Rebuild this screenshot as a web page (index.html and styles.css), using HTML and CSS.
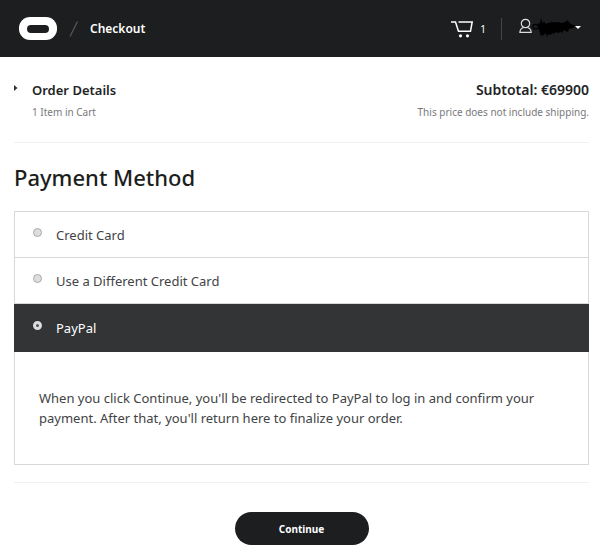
FILE: index.html
```
<!DOCTYPE html>
<html lang="en">
  <head>
    <meta charset="UTF-8" />
    <meta name="viewport" content="width=device-width, initial-scale=1.0" />
    <title>Checkout</title>
    <link rel="stylesheet" href="styles.css">
  </head>
  <body>
    <header class="header">
      <a class="logo" href="#" aria-label="Home">
        <svg width="38" height="23" viewBox="0 0 38 23">
          <rect width="38" height="23" rx="11" fill="#fff" />
          <rect x="8" y="8" width="22" height="8" rx="4" fill="#1c1e20" />
        </svg>
      </a>
      <svg class="slash" width="10" height="16" viewBox="0 0 10 16">
        <path d="M1 15.5L8.500 .5" stroke="#55585a" stroke-width="1.300" />
      </svg>
      <span class="title">Checkout</span>
      <a class="cart" href="#" aria-label="Cart, 1 item">
        <svg width="22" height="18" viewBox="0 0 22 18" fill="none" stroke="#fff" stroke-width="1.500">
          <path d="M0 2H4.500L7.500 11.200H19.500L21.200 2H7.500" />
          <circle cx="9.500" cy="15.800" r="1.600" fill="#fff" stroke="none" />
          <circle cx="16.500" cy="15.800" r="1.600" fill="#fff" stroke="none" />
        </svg>
        <span class="count">1</span>
      </a>
      <button class="account" type="button" aria-label="Account menu">
        <svg width="62" height="28" viewBox="0 0 62 28">
          <g fill="none" stroke="#ddd" stroke-width="1.200">
            <circle cx="6.500" cy="8.500" r="4.200" />
            <path d="M4.500 12.500C2 13.300 1 15 .9 17.400H12.200C12.100 15 11 13.300 8.500 12.500" />
          </g>
          <path d="M19 10C14 8 12 12 16 14C19 15 20 12 22 10" fill="none" stroke="#000" stroke-width="1.300" />
          <path d="M18 10L21 9L22 3L24 9L30 8L36 7L43 8L49 6L52 9L57 11L54 13L50 14L49 17L44 15L40 18L35 17L31 20L27 18L23 21L21 17Z" fill="#000" />
          <path d="M20 8L22 20L25 7L28 20L32 8L35 18L40 8L43 17L48 6L51 12" fill="none" stroke="#000" stroke-width="1.300" />
          <path d="M56 11H62L59 14Z" fill="#fff" />
        </svg>
      </button>
    </header>
    <main class="main">
      <section class="order">
        <button class="toggle" type="button" aria-label="Show order details">
          <svg width="4" height="6" viewBox="0 0 4 6">
            <path d="M0 0L3.500 3L0 6Z" fill="#333" />
          </svg>
        </button>
        <div class="order-info">
          <h2 class="order-title">Order Details</h2>
          <p class="note">1 Item in Cart</p>
        </div>
        <div class="order-total">
          <h2 class="order-title subtotal">Subtotal: €69900</h2>
          <p class="note">This price does not include shipping.</p>
        </div>
      </section>
      <h1 class="heading">Payment Method</h1>
      <form class="form">
        <div class="methods">
          <label class="method" for="card">
            <input type="radio" name="method" id="card" />
            <span>Credit Card</span>
          </label>
          <label class="method" for="other">
            <input type="radio" name="method" id="other" />
            <span>Use a Different Credit Card</span>
          </label>
          <label class="method selected" for="paypal">
            <input type="radio" name="method" id="paypal" checked />
            <span>PayPal</span>
          </label>
          <p class="details">
            When you click Continue, you'll be redirected to PayPal to log in and confirm your payment. After that, you'll return here to finalize your order.
          </p>
        </div>
        <div class="actions">
          <button class="continue" type="submit">Continue</button>
        </div>
      </form>
    </main>
  </body>
</html>
```
FILE: styles.css
```
* {
  box-sizing: border-box;
}
body {
  margin: 0;
  background-color: #fff;
  color: #414345;
  font-family: "Noto Sans", sans-serif;
  font-size: 13px;
}
h1,
h2,
p {
  margin: 0;
}
button {
  border: 0;
  padding: 0;
  background: none;
  font-family: inherit;
}
svg {
  display: block;
}
.header {
  display: flex;
  align-items: center;
  height: 57px;
  padding: 0 19px;
  background-color: #1c1e20;
  color: #fff;
}
.slash {
  margin: 0 11px 0 12px;
}
.title {
  font-size: 12px;
  font-weight: 600;
  line-height: 20px;
}
.cart {
  display: flex;
  align-items: center;
  gap: 7px;
  height: 22px;
  margin-left: auto;
  padding-right: 15px;
  border-right: 1px solid #444648;
  color: #fff;
  text-decoration: none;
}
.count {
  font-size: 10px;
}
.account {
  margin-left: 17px;
}
.main {
  padding: 0 11px 9px 14px;
}
.order {
  display: flex;
  align-items: flex-start;
  padding: 23px 0 22px;
  border-bottom: 1px solid #f0f0f0;
}
.toggle {
  width: 18px;
  padding: 5px 0;
}
.order-total {
  margin-left: auto;
  text-align: right;
}
.order-title {
  color: #222426;
  font-size: 13px;
  font-weight: 600;
  line-height: 20px;
}
.subtotal {
  font-size: 14px;
}
.note {
  margin-top: 4px;
  color: #77797c;
  font-size: 10px;
  line-height: 16px;
}
.heading {
  padding: 18px 0;
  color: #1c1e20;
  font-size: 22px;
  font-weight: 500;
  line-height: 32px;
}
.methods {
  border: 1px solid #d8d8d8;
}
.method {
  display: flex;
  align-items: center;
  gap: 14px;
  height: 46px;
  padding-left: 18px;
  border-bottom: 1px solid #d8d8d8;
}
.method input {
  appearance: none;
  width: 9px;
  height: 9px;
  margin: 0 0 4px;
  border: 1px solid #aaa;
  border-radius: 50%;
  background-color: #ddd;
}
.method input:checked {
  border: 3px solid #ddd;
  background-color: #555;
}
.selected {
  height: 48px;
  margin: 0 -1px;
  padding-left: 19px;
  border-color: #323436;
  background-color: #323436;
  color: #fff;
}
.details {
  padding: 36px 24px;
  line-height: 20px;
}
.actions {
  margin-top: 17px;
  padding-top: 29px;
  border-top: 1px solid #f0f0f0;
  text-align: center;
}
.continue {
  width: 134px;
  height: 33px;
  border-radius: 17px;
  background-color: #1c1e20;
  color: #fff;
  font-size: 10px;
  font-weight: 700;
}
```
